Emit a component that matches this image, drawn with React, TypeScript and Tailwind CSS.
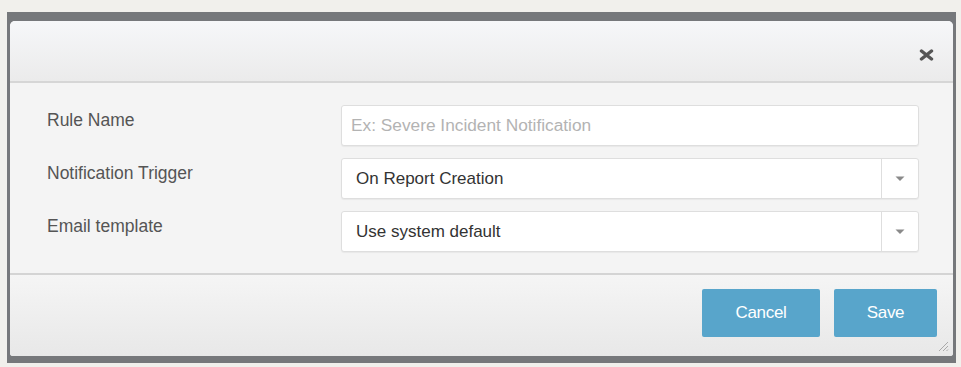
import React from 'react';

const font = { fontFamily: '"Liberation Sans", Arial, sans-serif' };

function CloseIcon() {
  return (
    <svg width="15" height="12" viewBox="0 0 15 12" className="text-[#555]">
      <path d="M2.5 2 L12.5 10 M12.5 2 L2.5 10" stroke="currentColor" strokeWidth="3.4" strokeLinecap="round" />
    </svg>
  );
}

function Caret() {
  return (
    <svg width="10" height="6" viewBox="0 0 10 6" className="text-[#8a8a8a]">
      <path d="M0.5 0.5 H9.5 L5 5 Z" fill="currentColor" />
    </svg>
  );
}

function Field({ label, children, first }: { label: string; children: React.ReactNode; first?: boolean }) {
  return (
    <div className={`flex items-start ${first ? '' : 'mt-[12px]'}`}>
      <div className="w-[294px] pt-[4px] text-[17.5px] leading-[22px] text-[#555]">{label}</div>
      <div className="flex-1">{children}</div>
    </div>
  );
}

function SelectBox({ value }: { value: string }) {
  return (
    <div className="flex h-[41px] rounded-[3px] border border-[#dedede] bg-white shadow-[0_1px_1px_rgba(0,0,0,0.05)]">
      <div className="flex flex-1 items-center pl-[14px] text-[17px] text-[#333]">{value}</div>
      <div className="flex w-[37px] items-center justify-center border-l border-[#dedede]">
        <Caret />
      </div>
    </div>
  );
}

export default function App() {
  return (
    <div className="h-[367px] w-[961px] bg-[#f1f0ec] pl-[7px] pt-[12px]" style={font}>
      <div className="h-[351px] w-[949px] bg-[#76787b] px-[3px] pb-[7px] pt-[9px]">
        <div className="relative flex h-[335px] flex-col overflow-hidden rounded-t-[5px] rounded-b-[3px] bg-[#f4f4f4]">
          <div className="flex h-[62px] items-center justify-end border-b-2 border-[#d6d6d6] bg-gradient-to-b from-[#f6f7f9] to-[#ebebeb] pr-[19px] pt-[8px]">
            <CloseIcon />
          </div>

          <div className="h-[192px] border-b-2 border-[#d4d4d4] pl-[37px] pr-[34px] pt-[22px]">
            <Field label="Rule Name" first>
              <div className="flex h-[41px] items-center rounded-[3px] border border-[#dedede] bg-white pl-[9px] text-[17.3px] text-[#b3b3b3] shadow-[0_1px_1px_rgba(0,0,0,0.05)]">
                Ex: Severe Incident Notification
              </div>
            </Field>
            <Field label="Notification Trigger">
              <SelectBox value="On Report Creation" />
            </Field>
            <Field label="Email template">
              <SelectBox value="Use system default" />
            </Field>
          </div>

          <div className="flex flex-1 items-start justify-end gap-[14px] bg-gradient-to-b from-[#f5f5f5] to-[#e8e8e8] pr-[16px] pt-[14px]">
            <button className="h-[48px] w-[118px] rounded-[2px] bg-[#58a5cb] text-[17px] tracking-[-0.3px] text-white">Cancel</button>
            <button className="h-[48px] w-[103px] rounded-[2px] bg-[#58a5cb] text-[17px] tracking-[-0.3px] text-white">Save</button>
          </div>

          <svg width="12" height="12" viewBox="0 0 12 12" className="absolute bottom-[4px] right-[4px] text-[#a9a9a9]">
            <path d="M11 2 L2 11 M11 6 L6 11 M11 9.5 L9.5 11" stroke="currentColor" strokeWidth="1" />
          </svg>
        </div>
      </div>
    </div>
  );
}
